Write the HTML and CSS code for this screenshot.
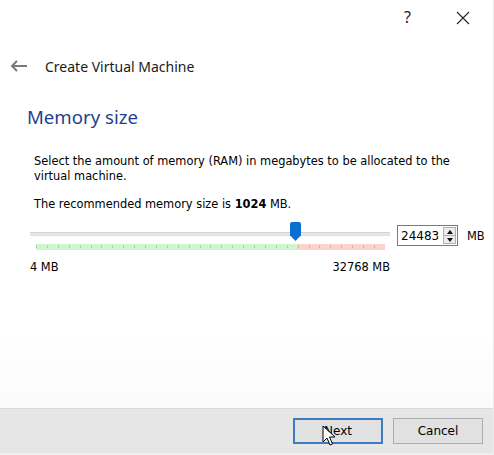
FILE: index.html
```html
<!DOCTYPE html>
<html lang="en">
<head>
    <meta charset="UTF-8">
    <title>Create Virtual Machine</title>
    <link rel="stylesheet" href="styles.css">
</head>
<body>
    <div class="window">
        <div class="titlebar">
            <span class="help">?</span>
            <svg class="close" width="14" height="14" viewBox="0 0 14 14">
                <path d="M1 1 L13 13 M13 1 L1 13" stroke="#222" stroke-width="1.1" fill="none"/>
            </svg>
        </div>

        <div class="header">
            <svg class="back" width="18" height="12" viewBox="0 0 18 12">
                <path d="M17 6 H2 M7 1 L2 6 L7 11" stroke="#7a7a7a" stroke-width="2" fill="none"/>
            </svg>
            <span class="header-title">Create Virtual Machine</span>
        </div>

        <div class="page">
            <h2 class="page-title">Memory size</h2>

            <div class="content">
                <p class="desc">Select the amount of memory (RAM) in megabytes to be allocated to the virtual machine.</p>
                <p class="desc">The recommended memory size is <b>1024</b> MB.</p>
            </div>

            <div class="memory-row">
                <div class="slider">
                    <div class="track"></div>
                    <div class="handle" style="left: 260px"></div>
                    <div class="scale">
                        <div class="scale-ok" style="width: 261px"></div>
                        <div class="scale-bad"></div>
                    </div>
                    <div class="limits">
                        <span>4 MB</span>
                        <span>32768 MB</span>
                    </div>
                </div>
                <div class="spinbox">
                    <span class="spin-value">24483</span>
                    <div class="spin-buttons">
                        <div class="spin-btn"><span class="arrow-up"></span></div>
                        <div class="spin-btn"><span class="arrow-down"></span></div>
                    </div>
                </div>
                <span class="unit">MB</span>
            </div>
        </div>

        <div class="footer">
            <button class="btn btn-default">Next</button>
            <button class="btn">Cancel</button>
            <svg class="cursor" width="14" height="22" viewBox="0 0 14 22">
                <path d="M1 1 L1 17 L5 13 L8 20 L10.5 19 L7.5 12 L13 12 Z" fill="#fff" stroke="#000" stroke-width="1"/>
            </svg>
        </div>
    </div>
</body>
</html>
```

FILE: styles.css
```css
body {
    margin: 0;
    padding: 0;
    background-color: #ffffff;
    font-family: 'DejaVu Sans', Verdana, sans-serif;
    font-size: 11.4px;
    color: #000;
}

.window {
    width: 494px;
    height: 455px;
    display: flex;
    flex-direction: column;
    box-sizing: border-box;
    border-right: 1px solid #ececec;
}

.titlebar {
    height: 36px;
    display: flex;
    align-items: center;
    justify-content: flex-end;
    padding-right: 23px;
}

    .titlebar .help {
        font-family: 'Noto Sans', sans-serif;
        font-size: 16px;
        color: #222;
        margin-right: 45px;
        margin-top: -2px;
    }

.header {
    height: 60px;
    display: flex;
    align-items: center;
    padding-left: 10px;
}

    .header .back {
        margin-right: 17px;
    }

.header-title {
    font-family: 'Noto Sans', sans-serif;
    font-size: 14px;
    color: #1a1a1a;
}

.page {
    flex: 1;
    padding-left: 27px;
    background: linear-gradient(#ffffff 75%, #fbfbfb);
}

.page-title {
    margin: 8px 0 0 0;
    font-family: 'Noto Sans', sans-serif;
    font-weight: normal;
    font-size: 18.6px;
    line-height: 26px;
    color: #1f3f91;
}

.content {
    padding-left: 7px;
    margin-top: 24px;
    width: 440px;
}

.desc {
    margin: 0 0 13px 0;
    line-height: 15px;
}

    .desc:last-child {
        margin-bottom: 10px;
    }

.memory-row {
    display: flex;
    align-items: flex-start;
    margin-left: 3px;
}

.slider {
    position: relative;
    width: 360px;
    height: 52px;
}

.track {
    margin-top: 10px;
    height: 2px;
    background-color: #e7e7e7;
    border-top: 1px solid #d4d4d4;
    border-bottom: 1px solid #e0e0e0;
}

.handle {
    position: absolute;
    top: 0;
    width: 11px;
    height: 19px;
    background-color: #0a6fd0;
    clip-path: polygon(0 0, 100% 0, 100% 70%, 50% 100%, 0 70%);
    border-radius: 2px 2px 0 0;
}

.scale {
    display: flex;
    margin: 8px 5px 0 6px;
    height: 6px;
    background-image: repeating-linear-gradient(to right, #a8b8a8 0, #a8b8a8 1px, transparent 1px, transparent 10.9px);
    background-size: 100% 3px;
    background-position: 0 1px;
    background-repeat: no-repeat;
}

.scale-ok {
    background-color: rgba(160, 235, 160, 0.5);
}

.scale-bad {
    flex: 1;
    background-color: rgba(245, 175, 165, 0.55);
}

.limits {
    display: flex;
    justify-content: space-between;
    margin-top: 10px;
}

.spinbox {
    display: flex;
    align-items: center;
    justify-content: space-between;
    width: 61px;
    height: 21px;
    box-sizing: border-box;
    border: 1px solid #7a7a7a;
    margin-left: 7px;
    margin-top: 3px;
    padding-left: 3px;
    font-size: 12px;
}

.spin-buttons {
    display: flex;
    flex-direction: column;
    height: 17px;
    width: 13px;
    margin-right: 1px;
    border: 1px solid #b0b0b0;
    box-sizing: border-box;
    background-color: #ececec;
}

.spin-btn {
    flex: 1;
    display: flex;
    align-items: center;
    justify-content: center;
}

    .spin-btn + .spin-btn {
        border-top: 1px solid #b0b0b0;
    }

.arrow-up {
    width: 0;
    height: 0;
    border-left: 3.5px solid transparent;
    border-right: 3.5px solid transparent;
    border-bottom: 4px solid #111;
}

.arrow-down {
    width: 0;
    height: 0;
    border-left: 3.5px solid transparent;
    border-right: 3.5px solid transparent;
    border-top: 4px solid #111;
}

.unit {
    margin-left: 9px;
    margin-top: 7px;
}

.footer {
    position: relative;
    height: 47px;
    box-sizing: border-box;
    border-top: 1px solid #d9d9d9;
    border-bottom: 2px solid #f0f0f0;
    background-color: #e6e6e6;
    display: flex;
    justify-content: flex-end;
    align-items: flex-start;
    padding: 9px 10px 0 0;
    gap: 10px;
}

.btn {
    width: 90px;
    height: 26px;
    font-family: 'DejaVu Sans', Verdana, sans-serif;
    font-size: 12px;
    color: #000;
    background-color: #e1e1e1;
    border: 1px solid #adadad;
    padding: 0;
}

.btn-default {
    border: 2px solid #3b7dc0;
}

.cursor {
    position: absolute;
    left: 322px;
    top: 16px;
}
```
